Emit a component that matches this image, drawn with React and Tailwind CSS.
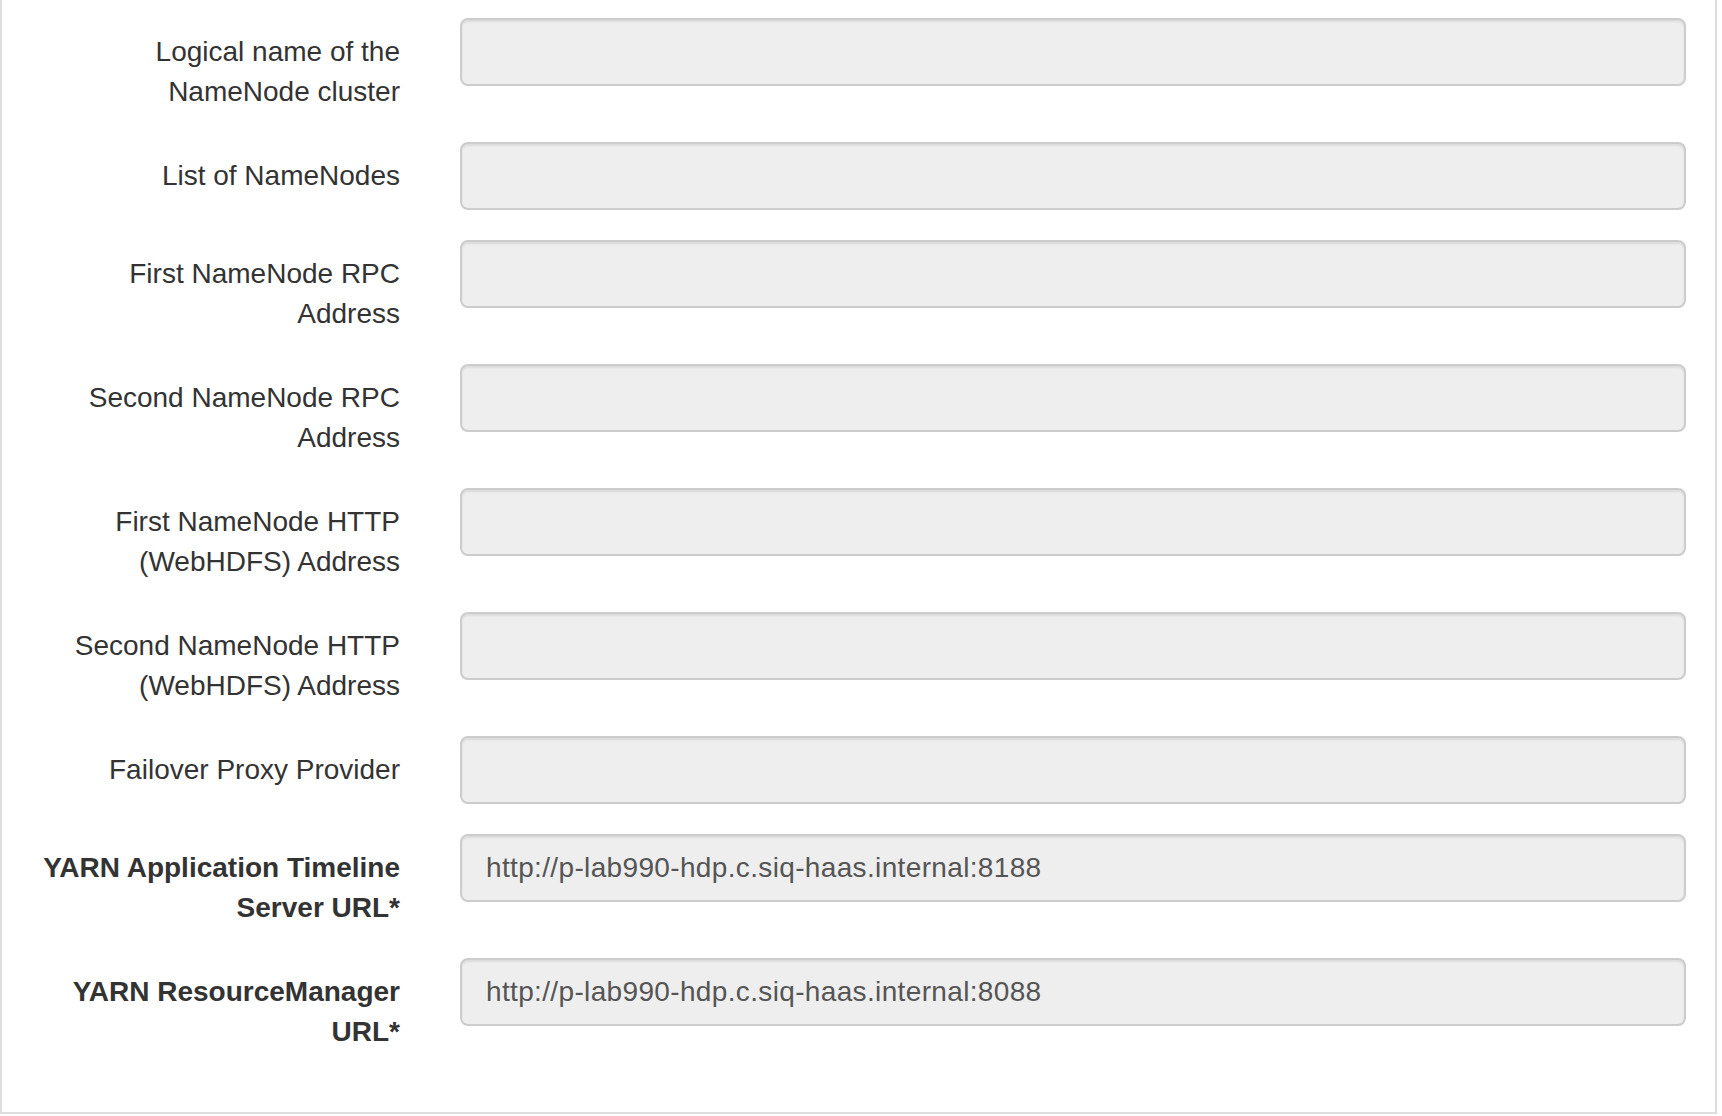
const fields = [
  { label: ['Logical name of the', 'NameNode cluster'], value: '' },
  { label: ['List of NameNodes'], value: '' },
  { label: ['First NameNode RPC', 'Address'], value: '' },
  { label: ['Second NameNode RPC', 'Address'], value: '' },
  { label: ['First NameNode HTTP', '(WebHDFS) Address'], value: '' },
  { label: ['Second NameNode HTTP', '(WebHDFS) Address'], value: '' },
  { label: ['Failover Proxy Provider'], value: '' },
  { label: ['YARN Application Timeline', 'Server URL*'], value: 'http://p-lab990-hdp.c.siq-haas.internal:8188', required: true },
  { label: ['YARN ResourceManager', 'URL*'], value: 'http://p-lab990-hdp.c.siq-haas.internal:8088', required: true },
];

const FormRow = ({ label, value, required }) => (
  <div className="flex mb-[30px]">
    <label
      className={`w-[428px] shrink-0 pr-[30px] pt-[14px] text-right text-[28px] leading-[40px] text-[#333] ${
        required ? 'font-bold' : 'font-normal'
      }`}
    >
      {label.map((line) => (
        <div key={line}>{line}</div>
      ))}
    </label>
    <div className="flex-1 pl-[30px] pr-[29px]">
      <input
        type="text"
        readOnly
        value={value}
        className="block w-full h-[68px] px-[24px] py-[12px] text-[28px] leading-[40px] tracking-[0.35px] text-[#555] bg-[#eee] border-2 border-[#ccc] rounded-[8px] shadow-[inset_0_2px_2px_rgba(0,0,0,0.075)] outline-none"
      />
    </div>
  </div>
);

export default function App() {
  return (
    <div className="w-[1722px] h-[1116px] bg-white" style={{ fontFamily: '"Liberation Sans", Arial, sans-serif' }}>
      <div className="w-[1717px] border-l-2 border-r-2 border-b-2 border-[#ddd] pt-[18px] pb-[30px]">
        {fields.map((f, i) => (
          <FormRow key={i} {...f} />
        ))}
      </div>
    </div>
  );
}
